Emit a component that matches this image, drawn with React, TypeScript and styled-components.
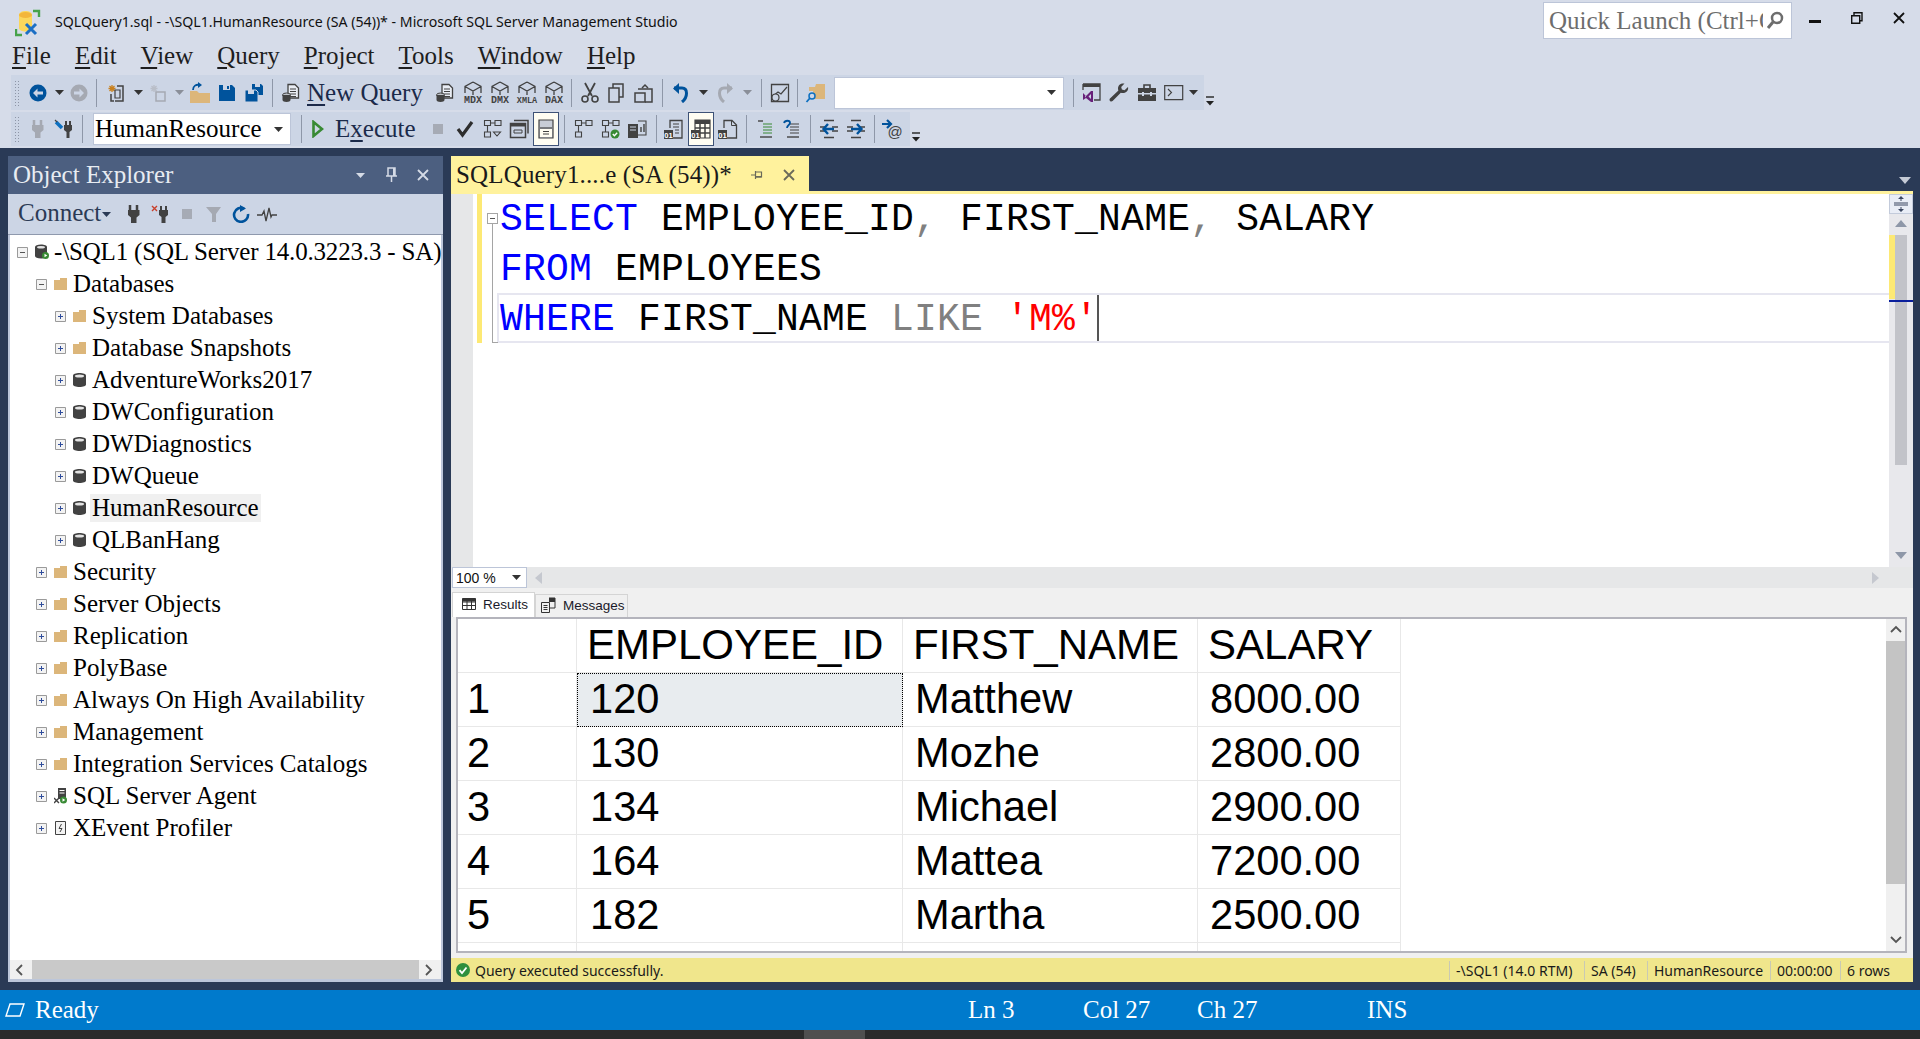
import React from 'react';
import styled, { createGlobalStyle } from 'styled-components';

const GlobalStyle = createGlobalStyle`
  html, body {
    margin: 0;
    padding: 0;
    background: #2a3a56;
  }
  body {
    font-family: "Liberation Serif", "Times New Roman", serif;
  }
`;

const Page = styled.div`
  width: 1920px;
  height: 1039px;
  overflow: hidden;
  display: flex;
  flex-direction: column;
  background: #d6dce9;
`;

const TitleBar = styled.div`
  height: 40px;
  display: flex;
  align-items: flex-start;
  flex-shrink: 0;
`;

const Logo = styled.div`
  width: 26px;
  height: 28px;
  margin: 9px 0 0 15px;
`;

const TitleText = styled.div`
  margin: 11px 0 0 14px;
  font: 14.15px/22px "Noto Sans", sans-serif;
  color: #111;
  flex: 1;
`;

const QuickLaunch = styled.div`
  width: 249px;
  height: 37px;
  margin: 2px 2px 0 0;
  box-sizing: border-box;
  background: #fff;
  border: 1px solid #bcc5d8;
  display: flex;
  align-items: center;
  padding: 0 4px 0 5px;
`;

const QuickText = styled.div`
  width: 214px;
  margin-right: 2px;
  overflow: hidden;
  white-space: nowrap;
  font-size: 25px;
  color: #6d6d6d;
`;

const WindowButton = styled.div`
  width: 42px;
  height: 36px;
  display: flex;
  align-items: center;
  justify-content: center;
`;

const MenuBar = styled.div`
  height: 35px;
  display: flex;
  align-items: center;
  gap: 24px;
  padding: 0 0 4px 12px;
  box-sizing: border-box;
  font-size: 25px;
  color: #1e1e1e;
  flex-shrink: 0;
`;

const MenuItem = styled.span`
  u {
    text-underline-offset: 3px;
  }
`;

const ToolRow = styled.div<{ $h: number; $mb: number }>`
  display: flex;
  height: ${p => p.$h}px;
  margin: 0 0 ${p => p.$mb}px 11px;
  flex-shrink: 0;
`;

const ToolStrip = styled.div`
  display: flex;
  align-items: center;
  background: #ccd5e5;
`;

const Grip = styled.div`
  width: 6px;
  height: 26px;
  margin: 0 5px 0 3px;
  background-image: radial-gradient(#8d95a6 0.8px, transparent 0.9px);
  background-size: 3px 3px;
`;

const Tool = styled.div<{ $w: number; $active?: boolean }>`
  width: ${p => p.$w}px;
  height: 100%;
  flex-shrink: 0;
  display: flex;
  align-items: center;
  justify-content: center;
  box-sizing: border-box;
  ${p => p.$active && 'background: #fffdf2; border: 1px solid #3e5277;'}
`;

const Sep = styled.div<{ $l: number; $r: number }>`
  width: 1px;
  height: 28px;
  background: #8e97a8;
  margin: 0 ${p => p.$r}px 0 ${p => p.$l}px;
  flex-shrink: 0;
`;

const ToolLabel = styled.span<{ $l: number; $r: number }>`
  font-size: 25px;
  color: #1b2a4a;
  margin: 0 ${p => p.$r}px 0 ${p => p.$l}px;
  white-space: nowrap;

  u {
    text-underline-offset: 3px;
  }
`;

const Combo = styled.div<{ $w: number; $l: number; $r: number }>`
  width: ${p => p.$w}px;
  height: 32px;
  margin: 0 ${p => p.$r}px 0 ${p => p.$l}px;
  box-sizing: border-box;
  background: #fff;
  border: 1px solid #bcc5d8;
  display: flex;
  align-items: center;
  justify-content: space-between;
  padding: 0 7px 0 1px;
  font-size: 25px;
  color: #000;
  flex-shrink: 0;
`;

const Overflow = styled.div`
  width: 13px;
  display: flex;
  align-items: flex-end;
  justify-content: center;
  padding-bottom: 4px;
`;

const Workspace = styled.div`
  height: 842px;
  flex-shrink: 0;
  background: #2a3a56;
  display: flex;
  box-sizing: border-box;
  padding: 8px 7px 8px 8px;
  gap: 8px;
`;

const Explorer = styled.div`
  width: 435px;
  display: flex;
  flex-direction: column;
  border: solid #bcc6da;
  border-width: 0 2px 3px;
  box-sizing: border-box;
  background: #fff;
  flex-shrink: 0;
`;

const ExplorerHead = styled.div`
  height: 38px;
  margin: 0 -2px;
  background: #4c5f80;
  display: flex;
  align-items: center;
  padding: 0 5px 0 5px;
  color: #e8ecf2;
  font-size: 25px;
  flex-shrink: 0;
`;

const HeadTitle = styled.div`
  flex: 1;
`;

const HeadButton = styled.div`
  width: 31px;
  display: flex;
  justify-content: center;
`;

const ConnectBar = styled.div`
  height: 41px;
  margin: 0 -2px;
  background: #ccd5e5;
  border-bottom: 1px solid #8f99ad;
  box-sizing: border-box;
  display: flex;
  align-items: center;
  padding-left: 10px;
  font-size: 25px;
  color: #2b3a55;
  flex-shrink: 0;
`;

const ConnectLabel = styled.span`
  margin-right: 1px;
  padding-bottom: 2px;
`;

const ConnectDrop = styled.div`
  margin-right: 9px;
  display: flex;
`;

const ConnectTool = styled.div<{ $w: number }>`
  width: ${p => p.$w}px;
  display: flex;
  justify-content: center;
`;

const Tree = styled.div`
  flex: 1;
  background: #fff;
  padding-top: 1px;
`;

const TreeRow = styled.div<{ $level: number }>`
  height: 32px;
  display: flex;
  align-items: center;
  padding-left: ${p => 7 + 19 * p.$level}px;
  font-size: 25px;
  color: #000;
  white-space: nowrap;
  letter-spacing: ${p => (p.$level === 0 ? '-0.17px' : 'normal')};
`;

const Expander = styled.div`
  width: 11px;
  height: 11px;
  margin-right: 7px;
  flex-shrink: 0;
  display: flex;
`;

const TreeIcon = styled.div`
  width: 13px;
  height: 16px;
  display: flex;
  align-items: center;
  flex-shrink: 0;
`;

const TreeLabel = styled.span<{ $sel?: boolean }>`
  margin-left: 4px;
  padding: 0 2px;
  ${p => p.$sel && 'background: #f0f0f0;'}
`;

const HScroll = styled.div`
  height: 19px;
  background: #f0f0f0;
  display: flex;
  flex-shrink: 0;
`;

const HScrollEnd = styled.div<{ $w: number }>`
  width: ${p => p.$w}px;
  display: flex;
  align-items: center;
  justify-content: center;
`;

const HScrollThumb = styled.div`
  flex: 1;
  background: #c9c9c9;
`;

const Doc = styled.div`
  flex: 1;
  display: flex;
  flex-direction: column;
  min-width: 0;
`;

const TabStrip = styled.div`
  height: 38px;
  display: flex;
  border-bottom: 3px solid #fff29d;
  box-sizing: border-box;
  flex-shrink: 0;
  position: relative;
`;

const DocTab = styled.div`
  width: 358px;
  height: 37px;
  background: #fff29d;
  display: flex;
  align-items: center;
  padding-left: 5px;
  box-sizing: border-box;
  font-size: 25px;
  color: #1a1a1a;
  flex-shrink: 0;
`;

const DocTabTitle = styled.span`
  width: 292px;
  white-space: nowrap;
  letter-spacing: 0.15px;
`;

const DocTabButton = styled.div<{ $w: number }>`
  width: ${p => p.$w}px;
  display: flex;
  justify-content: center;
`;

const TabMenu = styled.div`
  position: absolute;
  right: 2px;
  top: 19px;
  display: flex;
`;

const Editor = styled.div`
  height: 373px;
  display: flex;
  background: #fff;
  flex-shrink: 0;
`;

const Gutter = styled.div`
  width: 22px;
  background: #e6e7e8;
  flex-shrink: 0;
`;

const ChangeBar = styled.div`
  width: 5px;
  height: 149px;
  margin-left: 4px;
  background: #fde974;
  flex-shrink: 0;
`;

const FoldColumn = styled.div`
  width: 15px;
  flex-shrink: 0;
  position: relative;
`;

const FoldLine = styled.div`
  position: absolute;
  left: 10px;
  top: 30px;
  width: 6px;
  height: 119px;
  border-left: 1px solid #a5a5a5;
  border-bottom: 1px solid #a5a5a5;
  box-sizing: border-box;
`;

const FoldBox = styled.div`
  position: absolute;
  left: 5px;
  top: 19px;
  width: 11px;
  height: 11px;
  box-sizing: border-box;
  border: 1px solid #a5a5a5;
  background: #fff;
  display: flex;
  align-items: center;
  justify-content: center;

  &::after {
    content: '';
    width: 5px;
    height: 1px;
    background: #555;
  }
`;

const Code = styled.div`
  flex: 1;
  min-width: 0;
  font-family: "Liberation Mono", "DejaVu Sans Mono", monospace;
  font-size: 38px;
  letter-spacing: 0.2px;
  color: #000;
`;

const CodeLine = styled.div<{ $h: number }>`
  height: ${p => p.$h}px;
  line-height: 51px;
  padding-left: 3px;
  white-space: pre;
`;

const CurrentLine = styled.div`
  height: 50px;
  line-height: 50px;
  padding-left: 1px;
  white-space: pre;
  box-sizing: border-box;
  border: solid #e6e6f0;
  border-width: 2px 0 2px 2px;
`;

const Caret = styled.span`
  display: inline-block;
  width: 2px;
  height: 46px;
  background: #555;
  vertical-align: top;
  margin-left: -1px;
`;

const Kw = styled.span<{ $c: string }>`
  color: ${p => p.$c};
`;

const EditorScroll = styled.div`
  width: 24px;
  background: #e8e8ec;
  display: flex;
  flex-direction: column;
  flex-shrink: 0;
`;

const SplitButton = styled.div`
  height: 20px;
  background: #e9edf6;
  border: 1px solid #c3cbdb;
  box-sizing: border-box;
  display: flex;
  align-items: center;
  justify-content: center;
`;

const ArrowCell = styled.div<{ $h: number }>`
  height: ${p => p.$h}px;
  display: flex;
  align-items: center;
  justify-content: center;
  flex-shrink: 0;
`;

const EditorTrack = styled.div`
  flex: 1;
  position: relative;
`;

const EditorThumb = styled.div`
  position: absolute;
  left: 6px;
  top: 0;
  width: 12px;
  height: 230px;
  background: #c2c3c9;
`;

const EditorMark = styled.div`
  position: absolute;
  left: 0;
  top: 0;
  width: 6px;
  height: 64px;
  background: #fde974;
`;

const EditorCaretMark = styled.div`
  position: absolute;
  left: 0;
  top: 65px;
  width: 24px;
  height: 2px;
  background: #0a1f9c;
`;

const ZoomBar = styled.div`
  height: 21px;
  background: #e6e7e8;
  display: flex;
  align-items: center;
  flex-shrink: 0;
  padding-right: 32px;
`;

const ZoomCombo = styled.div`
  width: 75px;
  height: 21px;
  margin-left: 1px;
  background: #fff;
  border: 1px solid #bcc5d8;
  box-sizing: border-box;
  display: flex;
  align-items: center;
  justify-content: space-between;
  padding: 0 5px 0 3px;
  font: 14px "Liberation Sans", Arial, sans-serif;
  color: #111;
`;

const ZoomArrow = styled.div<{ $right?: boolean }>`
  margin-left: ${p => (p.$right ? 'auto' : '6px')};
  display: flex;
`;

const Results = styled.div`
  flex: 1;
  background: #f0f0f0;
  display: flex;
  flex-direction: column;
  min-height: 0;
`;

const ResultTabs = styled.div`
  height: 29px;
  display: flex;
  align-items: flex-end;
  padding-left: 1px;
  flex-shrink: 0;
`;

const ResultTab = styled.div<{ $active?: boolean }>`
  height: ${p => (p.$active ? 25 : 23)}px;
  width: ${p => (p.$active ? 83 : 93)}px;
  box-sizing: border-box;
  background: ${p => (p.$active ? '#fff' : '#f0f0f0')};
  border: 1px solid #d4d4d4;
  border-bottom: none;
  display: flex;
  align-items: center;
  gap: 7px;
  padding: 0 0 2px ${p => (p.$active ? 9 : 5)}px;
  font: 13.5px "Liberation Sans", Arial, sans-serif;
  color: #1a1a2a;
`;

const GridFrame = styled.div`
  height: 336px;
  margin: 0 6px 5px 5px;
  box-sizing: border-box;
  border: 2px solid #b4b4bc;
  background: #fff;
  display: flex;
  flex-shrink: 0;
`;

const GridBody = styled.div`
  flex: 1;
  overflow: hidden;
  font-family: "Liberation Sans", Arial, sans-serif;
  font-size: 41.6px;
  color: #000;
`;

const GridRow = styled.div`
  display: grid;
  grid-template-columns: 119px 326px 295px 203px;
  height: 54px;
`;

const GridHeader = styled(GridRow)`
  font-size: 42px;
`;

const Cell = styled.div<{ $sel?: boolean; $pad: number }>`
  box-sizing: border-box;
  border-right: 1px solid #e8e8e8;
  border-bottom: 1px solid #e8e8e8;
  padding-left: ${p => p.$pad}px;
  line-height: 52px;
  white-space: nowrap;
  ${p => p.$sel && 'background: #e8ecef; outline: 1px dotted #000; outline-offset: -1px;'}
`;

const GridScroll = styled.div`
  width: 19px;
  background: #f0f0f0;
  display: flex;
  flex-direction: column;
  flex-shrink: 0;
`;

const GridThumb = styled.div`
  height: 243px;
  background: #c4c4c4;
  flex-shrink: 0;
`;

const GridScrollGap = styled.div`
  flex: 1;
`;

const QueryStatus = styled.div`
  height: 24px;
  background: #f0e68c;
  display: flex;
  align-items: center;
  padding: 0 25px 0 5px;
  font: 14px "Noto Sans", sans-serif;
  color: #1a1a1a;
  flex-shrink: 0;
`;

const StatusMessage = styled.div`
  display: flex;
  align-items: center;
  gap: 5px;
  flex: 1;
`;

const StatusItem = styled.div<{ $w: number }>`
  width: ${p => p.$w}px;
  box-sizing: border-box;
  border-left: 1px solid #c9c9b4;
  padding-left: 6px;
  white-space: nowrap;
`;

const StatusBar = styled.div`
  height: 40px;
  background: #007acc;
  display: flex;
  align-items: center;
  padding-left: 5px;
  color: #fff;
  font-size: 25px;
  flex-shrink: 0;
`;

const StatusCell = styled.div<{ $w: number }>`
  width: ${p => p.$w}px;
  flex-shrink: 0;
  white-space: nowrap;
  display: flex;
  align-items: center;
  gap: 10px;
`;

const Taskbar = styled.div`
  height: 9px;
  background: #2b2b2b;
  flex-shrink: 0;
  padding-left: 804px;
`;

const TaskbarItem = styled.div`
  width: 61px;
  height: 9px;
  background: #4f4f4f;
`;

const DARK = '#424242';
const BLUE = '#00539c';
const MUTED = '#a5a9b2';
const TAN = '#dcb67a';

const Ico = ({ s = 20, w, h, children }: { s?: number; w?: number; h?: number; children?: React.ReactNode }) => (
  <svg width={w ?? s} height={h ?? s} viewBox={`0 0 ${w ?? s} ${h ?? s}`} fill="none" style={{ display: 'block', flexShrink: 0 }}>
    {children}
  </svg>
);

const Drop = ({ c = '#333' }: { c?: string }) => (
  <Ico w={9} h={5}>
    <path d="M0 0h9L4.5 5z" fill={c} />
  </Ico>
);

const OverflowIcon = () => (
  <Ico w={10} h={10}>
    <path d="M1 1h8" stroke="#222" strokeWidth="1.4" />
    <path d="M1 5h8L5 9.5z" fill="#222" />
  </Ico>
);

const NavIcon = ({ c, flip }: { c: string; flip?: boolean }) => (
  <Ico>
    <circle cx="10" cy="10" r="8.5" fill={c} />
    <path d={flip ? 'M15 10l-4.5-4.5v3H5v3h5.5v3z' : 'M5 10l4.5-4.5v3H15v3H9.5v3z'} fill="#ccd5e5" />
  </Ico>
);

const NewIcon = ({ muted }: { muted?: boolean }) => (
  <Ico>
    <path d="M6 2v7M2.5 5.5h7M3.5 3l5 5M8.5 3l-5 5" stroke={muted ? '#b9bec8' : '#c9801c'} strokeWidth="1.3" />
    <path d={muted ? 'M8 9h9v9H8z' : 'M11 3h6v15H9M5 11v7h3'} stroke={muted ? MUTED : DARK} strokeWidth="1.5" />
    {!muted && <path d="M9 7h5v8H9z" stroke={DARK} strokeWidth="1.2" />}
  </Ico>
);

const OpenIcon = () => (
  <Ico s={24}>
    <path d="M2 10h7l2 2h11v10H2z" fill={TAN} />
    <path d="M5 9c0-4 3-6 7-5" stroke={BLUE} strokeWidth="1.8" />
    <path d="M10 1l4 3-4 3z" fill={BLUE} />
  </Ico>
);

const SaveIcon = () => (
  <Ico s={18}>
    <path d="M1 1h13l3 3v13H1z" fill={BLUE} />
    <path d="M5 1h7v5H5z" fill="#ccd5e5" />
    <path d="M9 2h2v3H9z" fill={BLUE} />
  </Ico>
);

const SaveAllIcon = () => (
  <Ico>
    <path d="M8 1h9l2 2v9H8z" fill={BLUE} />
    <path d="M11 1h5v3h-5z" fill="#ccd5e5" />
    <path d="M1 7h11l2 2v10H1z" fill={BLUE} stroke="#ccd5e5" />
    <path d="M4 7h6v4H4z" fill="#ccd5e5" />
  </Ico>
);

const QueryDoc = () => (
  <Ico>
    <path d="M7 1.5h7L17.5 5v10H7z" stroke={DARK} strokeWidth="1.3" fill="#e9edf4" />
    <path d="M9 6h6M9 8.5h6M9 11h6M9 13.5h6" stroke={DARK} strokeWidth="1.2" />
    <ellipse cx="5.5" cy="12" rx="4" ry="2" fill="#bfc3c9" stroke={DARK} />
    <path d="M1.5 12v5c0 1.2 1.8 2 4 2s4-.8 4-2v-5" fill={DARK} />
  </Ico>
);

const CubeIcon = ({ t }: { t: string }) => (
  <Ico w={26} h={24}>
    <path d="M13 1l8 4.5V12M13 1L5 5.5V12M5 5.5l8 4.5 8-4.5M13 10v4" stroke={DARK} strokeWidth="1.3" />
    <text x="13" y="22" textAnchor="middle" fontFamily="Liberation Mono, monospace" fontSize={t.length > 3 ? 8.5 : 10} fontWeight="700" fill={DARK}>
      {t}
    </text>
  </Ico>
);

const CutIcon = () => (
  <Ico s={22}>
    <path d="M6 1l7 13M16 1L9 14" stroke={DARK} strokeWidth="1.8" />
    <circle cx="6" cy="17" r="3" stroke={DARK} strokeWidth="1.6" />
    <circle cx="16" cy="17" r="3" stroke={DARK} strokeWidth="1.6" />
  </Ico>
);

const CopyIcon = () => (
  <Ico>
    <path d="M7 5V1h10v13h-4" stroke={DARK} strokeWidth="1.5" />
    <path d="M3 5h10v14H3z" stroke={DARK} strokeWidth="1.5" />
  </Ico>
);

const PasteIcon = () => (
  <Ico>
    <path d="M5 6h14v13h-7" stroke={DARK} strokeWidth="1.5" />
    <path d="M9 5l3-3 3 3" stroke={DARK} strokeWidth="1.5" />
    <path d="M2 10h10v9H2z" stroke={DARK} strokeWidth="1.5" />
  </Ico>
);

const UndoIcon = ({ c, flip }: { c: string; flip?: boolean }) => (
  <Ico>
    <g transform={flip ? 'matrix(-1 0 0 1 20 0)' : undefined}>
      <path d="M3 5h8c6 0 6 9 0 14" stroke={c} strokeWidth="3" />
      <path d="M8 0L2 5.5 8 11z" fill={c} />
    </g>
  </Ico>
);

const ChartIcon = () => (
  <Ico>
    <path d="M1.5 1.5h17v17h-17z" stroke={DARK} strokeWidth="1.3" />
    <path d="M3 13l5-4 3 2 6-7" stroke={DARK} strokeWidth="1.2" />
    <circle cx="5.5" cy="14.5" r="3.5" fill="#ccd5e5" stroke={DARK} strokeWidth="1.2" />
  </Ico>
);

const FolderFindIcon = () => (
  <Ico s={24}>
    <path d="M4 6h6l1-3h9v15H8V10H4z" fill={TAN} />
    <circle cx="7" cy="15" r="3" fill="#ccd5e5" stroke="#0e70c0" strokeWidth="1.5" />
    <path d="M5 17l-3.5 4" stroke="#0e70c0" strokeWidth="1.8" />
  </Ico>
);

const VsIcon = () => (
  <Ico>
    <path d="M1 1h17v16h-6M1 1v6" stroke={DARK} strokeWidth="1.3" />
    <path d="M1 1h17v3H1z" fill={DARK} />
    <path d="M1 10l3 3 5-5h2v11H9l-5-4-3 2zM3 12.5v2l1-1zM9 11l-2.5 2.5L9 16z" fill="#68217a" fillRule="evenodd" />
  </Ico>
);

const WrenchIcon = () => (
  <Ico>
    <path d="M19 4l-3.5 3.3-2.6-.8-.7-2.5 3.3-3.400C12 0 9 2 9 5.500c0 .8.1 1.400.4 2L1 15.500c-1.500 1.800.8 4 2.600 2.600l8.200-8.400c3.800 1.500 8.200-1.500 7.200-5.700z" fill={DARK} />
  </Ico>
);

const ToolboxIcon = () => (
  <Ico>
    <path d="M7 5V2h6v3" stroke={DARK} strokeWidth="1.6" />
    <path d="M1 5h18v5H1zM1 11.5h18V18H1z" fill={DARK} />
    <path d="M5 9h2v4H5zM13 9h2v4h-2z" fill="#ccd5e5" />
  </Ico>
);

const TerminalIcon = () => (
  <Ico w={20} h={16}>
    <path d="M.7.7h18v14H.7z" stroke={DARK} strokeWidth="1.2" />
    <path d="M4 4l3.5 3.5L4 11" stroke={DARK} strokeWidth="1.1" />
  </Ico>
);

const PlugIcon = ({ c }: { c: string }) => (
  <Ico w={14} h={20}>
    <path d="M3 1v6M10 1v6" stroke={c} strokeWidth="2.5" />
    <path d="M1 6h11.5v5l-3 2.5V19H4v-5.500L1 11z" fill={c} />
  </Ico>
);

const ConnectPlugIcon = () => (
  <Ico>
    <path d="M12 2v5M16 2v5" stroke={DARK} strokeWidth="2" />
    <path d="M10 6h8v5l-2.5 2v6h-3v-6L10 11z" fill={DARK} />
    <path d="M2 3l6 6" stroke="#0e70c0" strokeWidth="3.5" />
    <path d="M1 1l2 2" stroke={DARK} strokeWidth="1.2" />
  </Ico>
);

const PlayIcon = () => (
  <Ico w={12} h={18}>
    <path d="M1.5 2L10 9l-8.5 7z" stroke="#388a34" strokeWidth="2.6" />
  </Ico>
);

const StopIcon = () => (
  <Ico s={10}>
    <path d="M0 0h10v10H0z" fill="#a6abb5" />
  </Ico>
);

const CheckIcon = () => (
  <Ico>
    <path d="M3 10l4.5 6L17 3" stroke="#2d2d2d" strokeWidth="3.2" />
  </Ico>
);

const FlowIcon = ({ badge }: { badge?: 'diamond' | 'check' }) => (
  <Ico>
    <path d="M2.5 1.5h6v5h-6zM13 1.5h6v5h-6zM2.5 13h6v5h-6z" stroke={DARK} strokeWidth="1.1" />
    <path d="M9 4h4M5.5 7v6" stroke={DARK} strokeWidth="1.1" />
    {badge === 'diamond' && <path d="M11.5 13h7L15 17z" stroke={DARK} strokeWidth="1.1" />}
    {badge === 'check' && (
      <>
        <circle cx="15" cy="15" r="4.5" fill="#388a34" />
        <path d="M12.8 15l1.6 1.7 2.8-3" stroke="#fff" strokeWidth="1.4" />
      </>
    )}
  </Ico>
);

const WindowsIcon = () => (
  <Ico>
    <path d="M5 1.5h14v13" stroke={DARK} strokeWidth="1.5" />
    <path d="M1.5 4.5h15v14h-15z" stroke={DARK} strokeWidth="1.5" />
    <path d="M2 4.5h14v3H2z" fill={DARK} />
    <path d="M5 11h8v3H5z" stroke={DARK} />
  </Ico>
);

const PaneIcon = () => (
  <Ico>
    <path d="M3 1h14v18H3z" fill="#c8cdd6" stroke={DARK} strokeWidth="1.2" />
    <path d="M4 9h12" stroke={DARK} strokeWidth="1.2" />
    <path d="M4 10h12v8H4z" fill="#fffdf2" />
    <path d="M7 12.5h6M7 15h6" stroke={DARK} />
  </Ico>
);

const ServerBarsIcon = () => (
  <Ico>
    <path d="M1 5h10v14H1z" fill={DARK} />
    <path d="M3 8h6M3 11h6" stroke="#ccd5e5" />
    <path d="M11 2h8v14h-8" stroke={DARK} strokeWidth="1.1" />
    <path d="M14 13V8M17 13V5" stroke={DARK} strokeWidth="1.4" />
  </Ico>
);

const Badge01 = () => (
  <>
    <path d="M0 11h9v9H0z" fill={DARK} />
    <text x="4.5" y="18.5" textAnchor="middle" fontFamily="Liberation Sans, sans-serif" fontSize="7.5" fontWeight="700" fill="#fff">
      01
    </text>
  </>
);

const TextResultIcon = () => (
  <Ico>
    <path d="M6 9V1.5h12V19H9" stroke={DARK} strokeWidth="1.3" />
    <path d="M9 5h6M9 8h6M11 11h4M11 14h4" stroke={DARK} strokeWidth="1.2" />
    <Badge01 />
  </Ico>
);

const GridResultIcon = () => (
  <Ico>
    <path d="M4 1h15v18H4z" fill="#fffdf2" stroke={DARK} strokeWidth="1.2" />
    <path d="M4 1h15v4H4z" fill={DARK} />
    <path d="M4 9h15M4 14h15M9 5v14M14 5v14" stroke={DARK} strokeWidth="1.5" />
    <Badge01 />
  </Ico>
);

const FileResultIcon = () => (
  <Ico>
    <path d="M6 9V1.5h8L18.5 6v13H9" stroke={DARK} strokeWidth="1.3" />
    <path d="M13.5 2v4.5H18" stroke={DARK} />
    <Badge01 />
  </Ico>
);

const AlignIcon = ({ variant }: { variant: 'green' | 'help' }) => (
  <Ico>
    <path d="M8 5h9M8 8h9M8 11h9M8 14h9" stroke={variant === 'green' ? '#388a34' : DARK} strokeWidth="1.2" />
    <path d="M5 18h12" stroke={DARK} strokeWidth="1.4" />
    {variant === 'green' && <path d="M3 2h5" stroke={DARK} strokeWidth="1.4" />}
    {variant === 'help' && <path d="M2 4c1-3 6-3 6 0 0 2-3 2-3 5" stroke={BLUE} strokeWidth="1.8" />}
  </Ico>
);

const IndentIcon = ({ out }: { out?: boolean }) => (
  <Ico>
    <path d="M5 1.5h10M5 18.5h10" stroke={DARK} strokeWidth="1.5" />
    <path d="M1 8h6M1 12h6M13 8h6M13 12h6" stroke={DARK} strokeWidth={1.6} />
    <path d={out ? 'M15 10H5M9 5l-4.5 5L9 15' : 'M5 10h10M11 5l4.5 5-4.5 5'} stroke={BLUE} strokeWidth="2.4" />
  </Ico>
);

const AtIcon = () => (
  <Ico s={24}>
    <path d="M1 7h8M6 3l4 4-4 4" stroke={BLUE} strokeWidth="2.2" />
    <text x="14" y="20" textAnchor="middle" fontFamily="Liberation Sans, sans-serif" fontSize="15" fill={DARK}>
      @
    </text>
  </Ico>
);

const Chevron = ({ dir, c = '#555' }: { dir: 'l' | 'r' | 'd' | 'u'; c?: string }) => {
  const d = { l: 'M7 1L2 6l5 5', r: 'M2 1l5 5-5 5', d: 'M1 3l5 5 5-5', u: 'M1 8l5-5 5 5' }[dir];
  return (
    <Ico s={12}>
      <path d={d} stroke={c} strokeWidth="1.8" />
    </Ico>
  );
};

const Tri = ({ dir, c }: { dir: 'u' | 'd' | 'l' | 'r'; c: string }) => {
  const d = { u: 'M0 8h12L6 1z', d: 'M0 2h12L6 9z', l: 'M9 0v12L2 6z', r: 'M3 0v12l7-6z' }[dir];
  return (
    <Ico s={12}>
      <path d={d} fill={c} />
    </Ico>
  );
};

const PinIcon = ({ c }: { c: string }) => (
  <Ico w={14} h={16}>
    <path d="M3 1h7v8H3zM1 9h11M6.5 9v6" stroke={c} strokeWidth="1.5" />
    <path d="M8 1h2v8H8z" fill={c} />
  </Ico>
);

const SidePinIcon = ({ c }: { c: string }) => (
  <Ico w={12} h={10}>
    <path d="M0 5h4M4.5 1v8M4.5 2h6v5h-6" stroke={c} strokeWidth="1.2" />
    <path d="M4.5 6h6v1.5h-6z" fill={c} />
  </Ico>
);

const CloseIcon = ({ c, s = 12 }: { c: string; s?: number }) => (
  <Ico s={s}>
    <path d={`M1 1l${s - 2} ${s - 2}M${s - 1} 1L1 ${s - 1}`} stroke={c} strokeWidth="1.8" />
  </Ico>
);

const FolderNode = () => (
  <Ico w={13} h={12}>
    <path d="M0 2h6V0h7v12H0z" fill={TAN} />
  </Ico>
);

const DbNode = () => (
  <Ico w={13} h={14}>
    <path d="M0 2.5C0 1 2.8 0 6.5 0S13 1 13 2.5v9c0 1.500-2.800 2.500-6.500 2.500S0 13 0 11.500z" fill={DARK} />
    <ellipse cx="6.5" cy="3" rx="4.5" ry="1.5" fill="#e4e4e4" />
  </Ico>
);

const ServerNode = () => (
  <Ico w={14} h={16}>
    <path d="M0 3c0-1.500 2.500-2.500 6-2.500s6 1 6 2.500v9c0 1.500-2.500 2.500-6 2.500S0 13.500 0 12z" fill={DARK} />
    <ellipse cx="6" cy="3.2" rx="4" ry="1.3" fill="#e4e4e4" />
    <circle cx="10.5" cy="11.5" r="3.5" fill="#388a34" />
    <path d="M9.5 9.8v3.4l2.8-1.700z" fill="#fff" />
  </Ico>
);

const AgentNode = () => (
  <Ico w={13} h={16}>
    <path d="M4 0h8v11H4z" fill={DARK} />
    <path d="M5.5 2.5h5M5.5 5h5" stroke="#fff" />
    <path d="M0 10l5 5M5 10l-5 5" stroke={DARK} strokeWidth="1.4" />
    <circle cx="9.5" cy="12" r="3.5" fill="#388a34" />
    <path d="M8.5 10.3v3.4l2.8-1.700z" fill="#fff" />
  </Ico>
);

const XEventNode = () => (
  <Ico w={13} h={14}>
    <path d="M1.5.5h10v13h-10z" stroke={DARK} fill="#f3f3f3" />
    <path d="M7.5 3L5 7.5h3L6 11" stroke={DARK} />
  </Ico>
);

const ExpandBox = ({ open }: { open?: boolean }) => (
  <Ico s={11}>
    <path d="M.5.5h10v10H.5z" fill="#f3f3f3" stroke="#9a9a9a" />
    <path d="M3 5.5h5" stroke={open ? '#555' : '#2f4d9c'} />
    {!open && <path d="M5.5 3v5" stroke="#2f4d9c" />}
  </Ico>
);

const LogoIcon = () => (
  <Ico w={26} h={28}>
    <path d="M4 6c0-2.500 3-4 6.500-4S17 3.500 17 6v13c0 2-3 3.500-6.500 3.500S4 21 4 19z" fill="#fbd75b" />
    <ellipse cx="10.5" cy="6" rx="6.5" ry="3" fill="#f3b63a" />
    <path d="M18 2h6v6M1 20v6h6" stroke="#46a24a" strokeWidth="2.4" />
    <path d="M11 15l10 10M21 15L11 25" stroke="#1c6fc4" strokeWidth="3" />
  </Ico>
);

const SuccessIcon = () => (
  <Ico s={14}>
    <circle cx="7" cy="7" r="7" fill="#2f8f3e" />
    <path d="M3.5 7.2L6 10l4.5-5.500" stroke="#fff" strokeWidth="1.8" />
  </Ico>
);

const GridGlyph = () => (
  <Ico s={14}>
    <path d="M.5 1.5h13v11H.5zM.5 5h13M.5 8.5h13M5 1.5v11M9.5 1.5v11" stroke="#333" />
    <path d="M.5 1.5h13v3H.5z" fill="#333" />
  </Ico>
);

const MessageGlyph = () => (
  <Ico w={15} h={16}>
    <path d="M.5 5.5h8v10h-8zM2.5 8.5h4M2.5 10.5h4M2.5 12.5h4" stroke="#333" />
    <path d="M8 1h6v10H9" stroke="#333" />
    <path d="M8 1h6v4H8z" fill="#333" />
  </Ico>
);

const treeRows: { level: number; label: string; node: React.ReactNode; open?: boolean; sel?: boolean }[] = [
  { level: 0, label: '-\\SQL1 (SQL Server 14.0.3223.3 - SA)', node: <ServerNode />, open: true },
  { level: 1, label: 'Databases', node: <FolderNode />, open: true },
  { level: 2, label: 'System Databases', node: <FolderNode /> },
  { level: 2, label: 'Database Snapshots', node: <FolderNode /> },
  { level: 2, label: 'AdventureWorks2017', node: <DbNode /> },
  { level: 2, label: 'DWConfiguration', node: <DbNode /> },
  { level: 2, label: 'DWDiagnostics', node: <DbNode /> },
  { level: 2, label: 'DWQueue', node: <DbNode /> },
  { level: 2, label: 'HumanResource', node: <DbNode />, sel: true },
  { level: 2, label: 'QLBanHang', node: <DbNode /> },
  { level: 1, label: 'Security', node: <FolderNode /> },
  { level: 1, label: 'Server Objects', node: <FolderNode /> },
  { level: 1, label: 'Replication', node: <FolderNode /> },
  { level: 1, label: 'PolyBase', node: <FolderNode /> },
  { level: 1, label: 'Always On High Availability', node: <FolderNode /> },
  { level: 1, label: 'Management', node: <FolderNode /> },
  { level: 1, label: 'Integration Services Catalogs', node: <FolderNode /> },
  { level: 1, label: 'SQL Server Agent', node: <AgentNode /> },
  { level: 1, label: 'XEvent Profiler', node: <XEventNode /> }
];

const employees = [
  ['1', '120', 'Matthew', '8000.00'],
  ['2', '130', 'Mozhe', '2800.00'],
  ['3', '134', 'Michael', '2900.00'],
  ['4', '164', 'Mattea', '7200.00'],
  ['5', '182', 'Martha', '2500.00'],
  ['', '', '', '']
];

const menus = ['File', 'Edit', 'View', 'Query', 'Project', 'Tools', 'Window', 'Help'];

const App = () => (
  <Page>
    <GlobalStyle />
    <TitleBar>
      <Logo>
        <LogoIcon />
      </Logo>
      <TitleText>SQLQuery1.sql - -\SQL1.HumanResource (SA (54))* - Microsoft SQL Server Management Studio</TitleText>
      <QuickLaunch>
        <QuickText>Quick Launch (Ctrl+Q)</QuickText>
        <Ico s={20}>
          <circle cx="12" cy="7" r="5" stroke="#6d6d6d" strokeWidth="2.5" />
          <path d="M8 11l-5 6" stroke="#6d6d6d" strokeWidth="3" />
        </Ico>
      </QuickLaunch>
      <WindowButton>
        <Ico s={12}>
          <path d="M0 8h12v3H0z" fill="#111" />
        </Ico>
      </WindowButton>
      <WindowButton>
        <Ico s={12}>
          <path d="M3 3V.7h8v8H9" stroke="#111" strokeWidth="1.4" />
          <path d="M.7 3.7h8v7.6h-8z" stroke="#111" strokeWidth="1.4" />
        </Ico>
      </WindowButton>
      <WindowButton>
        <CloseIcon c="#111" />
      </WindowButton>
    </TitleBar>

    <MenuBar>
      {menus.map(m => (
        <MenuItem key={m}>
          <u>{m[0]}</u>
          {m.slice(1)}
        </MenuItem>
      ))}
    </MenuBar>

    <ToolRow $h={35} $mb={2}>
      <ToolStrip>
        <Grip />
        <Tool $w={26}><NavIcon c={BLUE} /></Tool>
        <Tool $w={16}><Drop /></Tool>
        <Tool $w={24}><NavIcon c={MUTED} flip /></Tool>
        <Sep $l={5} $r={5} />
        <Tool $w={28}><NewIcon /></Tool>
        <Tool $w={16}><Drop /></Tool>
        <Tool $w={24}><NewIcon muted /></Tool>
        <Tool $w={18}><Drop c="#8a8f99" /></Tool>
        <Tool $w={24}><OpenIcon /></Tool>
        <Tool $w={30}><SaveIcon /></Tool>
        <Tool $w={24}><SaveAllIcon /></Tool>
        <Sep $l={6} $r={5} />
        <Tool $w={26}><QueryDoc /></Tool>
        <ToolLabel $l={3} $r={8}><u>N</u>ew Query</ToolLabel>
        <Tool $w={28}><QueryDoc /></Tool>
        <Tool $w={28}><CubeIcon t="MDX" /></Tool>
        <Tool $w={27}><CubeIcon t="DMX" /></Tool>
        <Tool $w={27}><CubeIcon t="XMLA" /></Tool>
        <Tool $w={26}><CubeIcon t="DAX" /></Tool>
        <Sep $l={4} $r={5} />
        <Tool $w={26}><CutIcon /></Tool>
        <Tool $w={27}><CopyIcon /></Tool>
        <Tool $w={26}><PasteIcon /></Tool>
        <Sep $l={6} $r={5} />
        <Tool $w={26}><UndoIcon c={BLUE} /></Tool>
        <Tool $w={20}><Drop /></Tool>
        <Tool $w={22}><UndoIcon c={MUTED} flip /></Tool>
        <Tool $w={24}><Drop c="#8a8f99" /></Tool>
        <Sep $l={1} $r={5} />
        <Tool $w={26}><ChartIcon /></Tool>
        <Sep $l={4} $r={5} />
        <Tool $w={28}><FolderFindIcon /></Tool>
        <Combo $w={230} $l={3} $r={9}>
          <span />
          <Drop />
        </Combo>
        <Sep $l={0} $r={4} />
        <Tool $w={28}><VsIcon /></Tool>
        <Tool $w={27}><WrenchIcon /></Tool>
        <Tool $w={28}><ToolboxIcon /></Tool>
        <Tool $w={26}><TerminalIcon /></Tool>
        <Tool $w={14}><Drop /></Tool>
        <Tool $w={3} />
      </ToolStrip>
      <Overflow><OverflowIcon /></Overflow>
    </ToolRow>

    <ToolRow $h={34} $mb={2}>
      <ToolStrip>
        <Grip />
        <Tool $w={25}><PlugIcon c={MUTED} /></Tool>
        <Tool $w={28}><ConnectPlugIcon /></Tool>
        <Sep $l={4} $r={10} />
        <Combo $w={198} $l={0} $r={10}>
          HumanResource
          <Drop />
        </Combo>
        <Sep $l={0} $r={0} />
        <Tool $w={32}><PlayIcon /></Tool>
        <ToolLabel $l={1} $r={9}>E<u>x</u>ecute</ToolLabel>
        <Tool $w={26}><StopIcon /></Tool>
        <Tool $w={28}><CheckIcon /></Tool>
        <Tool $w={27}><FlowIcon badge="diamond" /></Tool>
        <Tool $w={27}><WindowsIcon /></Tool>
        <Tool $w={26} $active><PaneIcon /></Tool>
        <Sep $l={5} $r={5} />
        <Tool $w={27}><FlowIcon /></Tool>
        <Tool $w={26}><FlowIcon badge="check" /></Tool>
        <Tool $w={28}><ServerBarsIcon /></Tool>
        <Sep $l={5} $r={4} />
        <Tool $w={27}><TextResultIcon /></Tool>
        <Tool $w={26} $active><GridResultIcon /></Tool>
        <Tool $w={28}><FileResultIcon /></Tool>
        <Sep $l={4} $r={4} />
        <Tool $w={28}><AlignIcon variant="green" /></Tool>
        <Tool $w={26}><AlignIcon variant="help" /></Tool>
        <Sep $l={5} $r={5} />
        <Tool $w={27}><IndentIcon out /></Tool>
        <Tool $w={27}><IndentIcon /></Tool>
        <Sep $l={4} $r={4} />
        <Tool $w={28}><AtIcon /></Tool>
        <Tool $w={3} />
      </ToolStrip>
      <Overflow><OverflowIcon /></Overflow>
    </ToolRow>

    <Workspace>
      <Explorer>
        <ExplorerHead>
          <HeadTitle>Object Explorer</HeadTitle>
          <HeadButton><Drop c="#d5dbe6" /></HeadButton>
          <HeadButton><PinIcon c="#d5dbe6" /></HeadButton>
          <HeadButton><CloseIcon c="#d5dbe6" /></HeadButton>
        </ExplorerHead>
        <ConnectBar>
          <ConnectLabel>Connect</ConnectLabel>
          <ConnectDrop><Drop c="#2b3a55" /></ConnectDrop>
          <ConnectTool $w={28}><PlugIcon c={DARK} /></ConnectTool>
          <ConnectTool $w={26}>
            <Ico>
              <path d="M1 2l5 5M6 2L1 7" stroke="#c8402c" strokeWidth="1.4" />
              <path d="M10 2v5M15 2v5" stroke={DARK} strokeWidth="2" />
              <path d="M8 6h9v5l-2.5 2v6h-4v-6L8 11z" fill={DARK} />
            </Ico>
          </ConnectTool>
          <ConnectTool $w={26}><StopIcon /></ConnectTool>
          <ConnectTool $w={28}>
            <Ico s={18}>
              <path d="M1 2h15l-5 7v8H7V9z" fill={MUTED} />
            </Ico>
          </ConnectTool>
          <ConnectTool $w={26}>
            <Ico s={18}>
              <path d="M12 3.5A7 7 0 1 0 16 9" stroke={BLUE} strokeWidth="2.6" />
              <path d="M8 0l6 3.5L8 7z" fill={BLUE} />
            </Ico>
          </ConnectTool>
          <ConnectTool $w={26}>
            <Ico w={20} h={16}>
              <path d="M0 9h5l2-4 2 10 3-13 2 9 1-2h5" stroke={DARK} strokeWidth="1.3" />
            </Ico>
          </ConnectTool>
        </ConnectBar>
        <Tree>
          {treeRows.map(r => (
            <TreeRow key={r.label} $level={r.level}>
              <Expander><ExpandBox open={r.open} /></Expander>
              <TreeIcon>{r.node}</TreeIcon>
              <TreeLabel $sel={r.sel}>{r.label}</TreeLabel>
            </TreeRow>
          ))}
        </Tree>
        <HScroll>
          <HScrollEnd $w={22}><Chevron dir="l" /></HScrollEnd>
          <HScrollThumb />
          <HScrollEnd $w={22}><Chevron dir="r" /></HScrollEnd>
        </HScroll>
      </Explorer>

      <Doc>
        <TabStrip>
          <DocTab>
            <DocTabTitle>SQLQuery1....e (SA (54))*</DocTabTitle>
            <DocTabButton $w={24}><SidePinIcon c="#6a6a5a" /></DocTabButton>
            <DocTabButton $w={40}><CloseIcon c="#6a6a5a" /></DocTabButton>
          </DocTab>
          <TabMenu><Tri dir="d" c="#c5cbd6" /></TabMenu>
        </TabStrip>
        <Editor>
          <Gutter />
          <ChangeBar />
          <FoldColumn>
            <FoldLine />
            <FoldBox />
          </FoldColumn>
          <Code>
            <CodeLine $h={50}>
              <Kw $c="#0000ff">SELECT</Kw> EMPLOYEE_ID<Kw $c="#808080">,</Kw> FIRST_NAME<Kw $c="#808080">,</Kw> SALARY
            </CodeLine>
            <CodeLine $h={49}>
              <Kw $c="#0000ff">FROM</Kw> EMPLOYEES
            </CodeLine>
            <CurrentLine>
              <Kw $c="#0000ff">WHERE</Kw> FIRST_NAME <Kw $c="#808080">LIKE</Kw> <Kw $c="#ff0000">'M%'</Kw><Caret />
            </CurrentLine>
          </Code>
          <EditorScroll>
            <SplitButton>
              <Ico w={16} h={16}>
                <path d="M1 7h14M1 9h14M8 1v4M8 11v4" stroke="#3a4660" />
                <path d="M5 3l3-3 3 3zM5 13l3 3 3-3z" fill="#3a4660" />
              </Ico>
            </SplitButton>
            <ArrowCell $h={21}><Tri dir="u" c="#8e97a8" /></ArrowCell>
            <EditorTrack>
              <EditorThumb />
              <EditorMark />
              <EditorCaretMark />
            </EditorTrack>
            <ArrowCell $h={22}><Tri dir="d" c="#8e97a8" /></ArrowCell>
          </EditorScroll>
        </Editor>
        <ZoomBar>
          <ZoomCombo>
            100 %
            <Drop />
          </ZoomCombo>
          <ZoomArrow><Tri dir="l" c="#c5c8cf" /></ZoomArrow>
          <ZoomArrow $right><Tri dir="r" c="#c5c8cf" /></ZoomArrow>
        </ZoomBar>
        <Results>
          <ResultTabs>
            <ResultTab $active><GridGlyph />Results</ResultTab>
            <ResultTab><MessageGlyph />Messages</ResultTab>
          </ResultTabs>
          <GridFrame>
            <GridBody>
              <GridHeader>
                <Cell $pad={10} />
                <Cell $pad={10}>EMPLOYEE_ID</Cell>
                <Cell $pad={10}>FIRST_NAME</Cell>
                <Cell $pad={10}>SALARY</Cell>
              </GridHeader>
              {employees.map((e, i) => (
                <GridRow key={i}>
                  <Cell $pad={9}>{e[0]}</Cell>
                  <Cell $pad={13} $sel={i === 0}>{e[1]}</Cell>
                  <Cell $pad={12}>{e[2]}</Cell>
                  <Cell $pad={12}>{e[3]}</Cell>
                </GridRow>
              ))}
            </GridBody>
            <GridScroll>
              <ArrowCell $h={22}><Chevron dir="u" /></ArrowCell>
              <GridThumb />
              <GridScrollGap />
              <ArrowCell $h={22}><Chevron dir="d" /></ArrowCell>
            </GridScroll>
          </GridFrame>
          <QueryStatus>
            <StatusMessage>
              <SuccessIcon />
              Query executed successfully.
            </StatusMessage>
            <StatusItem $w={135}>-\SQL1 (14.0 RTM)</StatusItem>
            <StatusItem $w={63}>SA (54)</StatusItem>
            <StatusItem $w={123}>HumanResource</StatusItem>
            <StatusItem $w={70}>00:00:00</StatusItem>
            <StatusItem $w={48}>6 rows</StatusItem>
          </QueryStatus>
        </Results>
      </Doc>
    </Workspace>

    <StatusBar>
      <StatusCell $w={963}>
        <Ico w={20} h={14}>
          <path d="M5 1h14l-4 12H1z" stroke="#fff" strokeWidth="1.4" />
        </Ico>
        <span>Ready</span>
      </StatusCell>
      <StatusCell $w={115}>Ln 3</StatusCell>
      <StatusCell $w={114}>Col 27</StatusCell>
      <StatusCell $w={170}>Ch 27</StatusCell>
      <StatusCell $w={60}>INS</StatusCell>
    </StatusBar>
    <Taskbar>
      <TaskbarItem />
    </Taskbar>
  </Page>
);

export default App;
